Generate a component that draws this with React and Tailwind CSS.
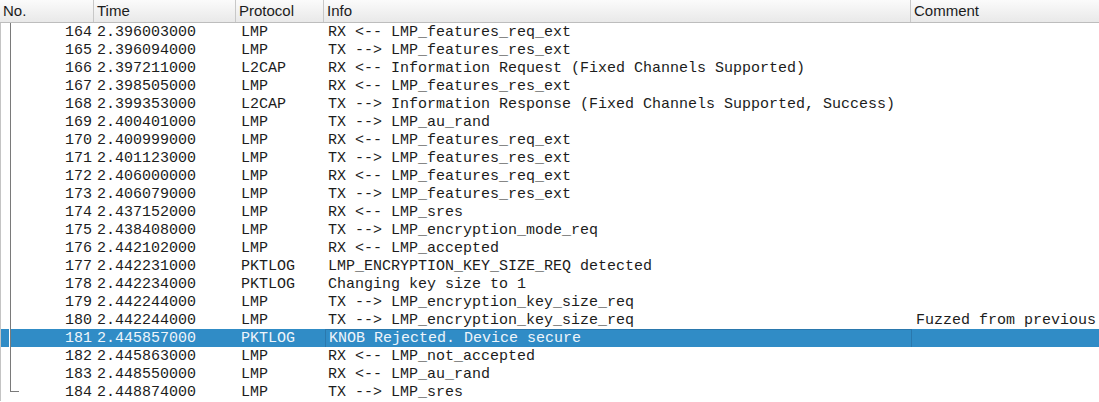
import React from 'react';

const rows = [
  [164, '2.396003000', 'LMP', 'RX <-- LMP_features_req_ext', ''],
  [165, '2.396094000', 'LMP', 'TX --> LMP_features_res_ext', ''],
  [166, '2.397211000', 'L2CAP', 'RX <-- Information Request (Fixed Channels Supported)', ''],
  [167, '2.398505000', 'LMP', 'RX <-- LMP_features_res_ext', ''],
  [168, '2.399353000', 'L2CAP', 'TX --> Information Response (Fixed Channels Supported, Success)', ''],
  [169, '2.400401000', 'LMP', 'TX --> LMP_au_rand', ''],
  [170, '2.400999000', 'LMP', 'RX <-- LMP_features_req_ext', ''],
  [171, '2.401123000', 'LMP', 'TX --> LMP_features_res_ext', ''],
  [172, '2.406000000', 'LMP', 'RX <-- LMP_features_req_ext', ''],
  [173, '2.406079000', 'LMP', 'TX --> LMP_features_res_ext', ''],
  [174, '2.437152000', 'LMP', 'RX <-- LMP_sres', ''],
  [175, '2.438408000', 'LMP', 'TX --> LMP_encryption_mode_req', ''],
  [176, '2.442102000', 'LMP', 'RX <-- LMP_accepted', ''],
  [177, '2.442231000', 'PKTLOG', 'LMP_ENCRYPTION_KEY_SIZE_REQ detected', ''],
  [178, '2.442234000', 'PKTLOG', 'Changing key size to 1', ''],
  [179, '2.442244000', 'LMP', 'TX --> LMP_encryption_key_size_req', ''],
  [180, '2.442244000', 'LMP', 'TX --> LMP_encryption_key_size_req', 'Fuzzed from previous'],
  [181, '2.445857000', 'PKTLOG', 'KNOB Rejected. Device secure', ''],
  [182, '2.445863000', 'LMP', 'RX <-- LMP_not_accepted', ''],
  [183, '2.448550000', 'LMP', 'RX <-- LMP_au_rand', ''],
  [184, '2.448874000', 'LMP', 'TX --> LMP_sres', ''],
];

const cols = 'grid grid-cols-[94px_142px_88px_587px_1fr]';

const HeaderCell = ({ children, last }) => (
  <div className={`h-[22px] flex items-center pl-[3px] pt-px ${last ? '' : 'border-r border-[#c8c8c8]'}`}>
    {children}
  </div>
);

export default function App() {
  return (
    <div className="w-[1099px] h-[402px] bg-white overflow-hidden text-[#1c1c1c] relative">
      <div
        className={`${cols} border-b border-[#bdbdbd] bg-gradient-to-b from-[#fbfbfb] to-[#e9e9e9] text-[15px]`}
        style={{ fontFamily: '"Liberation Sans", Arial, sans-serif' }}
      >
        <HeaderCell>No.</HeaderCell>
        <HeaderCell>Time</HeaderCell>
        <HeaderCell>Protocol</HeaderCell>
        <HeaderCell>Info</HeaderCell>
        <HeaderCell last>Comment</HeaderCell>
      </div>

      <div className="border-l border-[#c4c4c4]" style={{ fontFamily: '"Liberation Mono", "Courier New", monospace' }}>
        {rows.map(([no, time, proto, info, comment]) => {
          const sel = no === 181;
          return (
            <div
              key={no}
              className={`${cols} h-[18px] text-[15px] leading-[20px] whitespace-nowrap overflow-hidden ${sel ? 'bg-[#308cc6] text-[#eef5fb]' : ''}`}
            >
              <div className="text-right pr-[3px]">{no}</div>
              <div className="pl-[2px]">{time}</div>
              <div className="pl-[4px]">{proto}</div>
              <div className={`pl-[3px] ${sel ? 'border border-[#2a78ad] leading-[18px]' : ''}`}>{info}</div>
              <div className="pl-[4px] overflow-hidden">{comment}</div>
            </div>
          );
        })}
      </div>

      {/* tree line in the No. column */}
      <div className="absolute left-[10px] top-[23px] h-[369px] w-px bg-[#7a7a7a]" />
      <div className="absolute left-[9px] top-[329px] h-[18px] w-px bg-white" />
      <div className="absolute left-[10px] top-[391px] h-px w-[9px] bg-[#7a7a7a]" />
    </div>
  );
}
